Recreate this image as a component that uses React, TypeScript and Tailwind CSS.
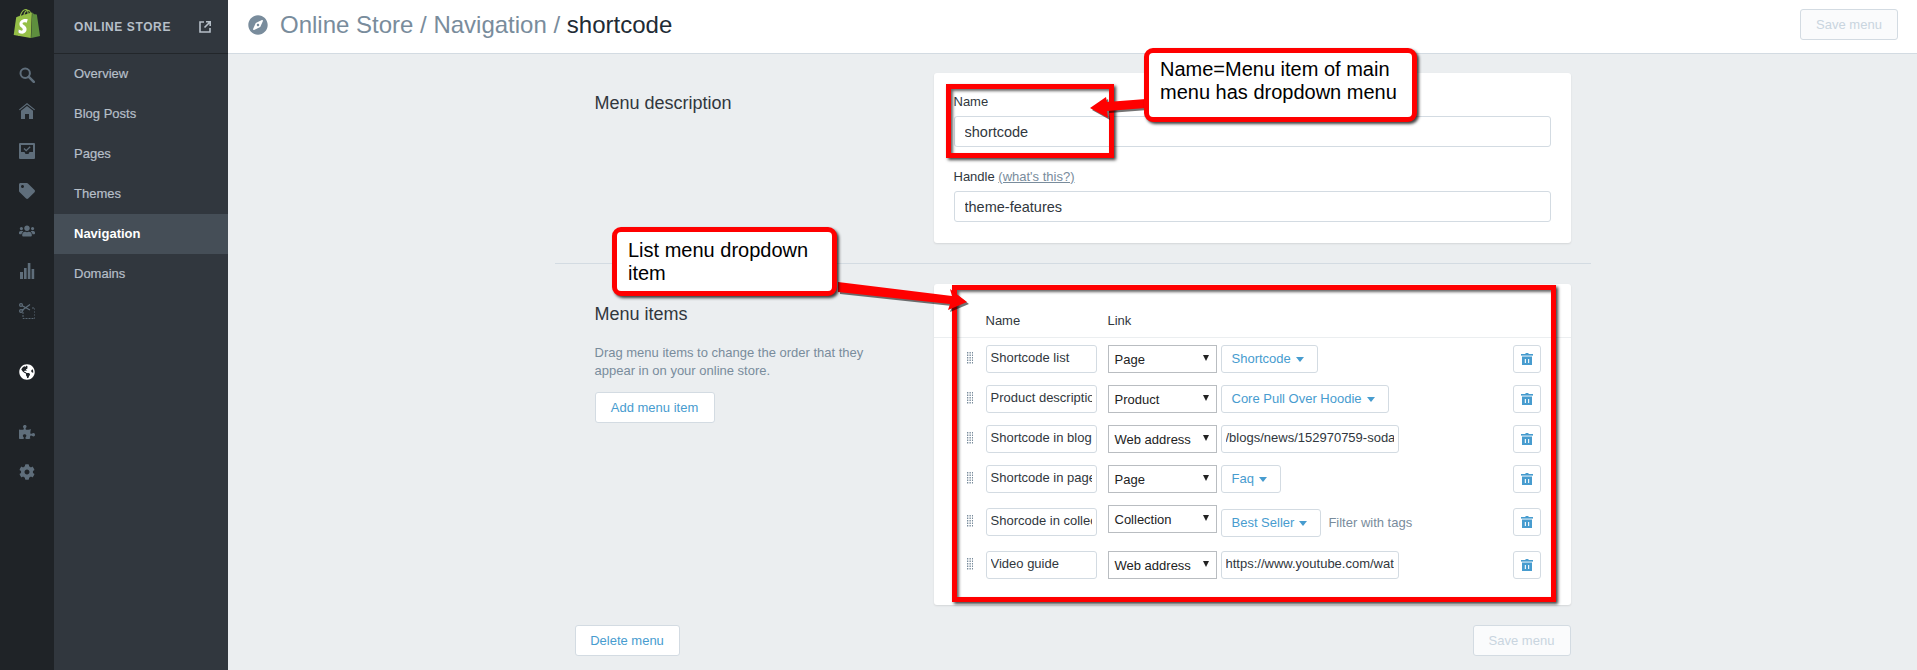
import React from 'react';
import { FaCog, FaCompass, FaGlobeAmericas, FaPuzzlePiece, FaTag, FaUsers } from 'react-icons/fa';

const ShopifyLogo = () => (
  <svg viewBox="0 0 24 24" preserveAspectRatio="none" className="w-[30px] h-[29px]">
    <rect x="5" y="8" width="8" height="14" fill="#fff" />
    <path fill="#5e8e3e" d="M15.337 23.979l7.216-1.561s-2.604-17.613-2.625-17.73c-.018-.116-.114-.192-.211-.192s-1.929-.136-1.929-.136-1.275-1.274-1.439-1.411c-.045-.037-.075-.057-.121-.074l-.914 21.104h.023z" />
    <path fill="#95bf47" d="M11.71 11.305s-.81-.424-1.774-.424c-1.447 0-1.504.906-1.504 1.141 0 1.232 3.24 1.715 3.24 4.629 0 2.295-1.44 3.76-3.406 3.76-2.354 0-3.54-1.465-3.54-1.465l.646-2.086s1.245 1.066 2.28 1.066c.675 0 .975-.545.975-.932 0-1.619-2.654-1.694-2.654-4.359-.034-2.237 1.571-4.416 4.827-4.416 1.257 0 1.875.361 1.875.361l-.945 2.715-.02.01zM11.17.83c.136 0 .271.038.405.135-.984.465-2.064 1.639-2.508 3.992-.656.213-1.293.405-1.889.578C7.697 3.75 8.951.84 11.17.84V.83zm1.235 2.949v.135c-.754.232-1.583.484-2.394.736.466-1.777 1.333-2.645 2.085-2.971.193.501.309 1.176.309 2.1zm.539-2.234c.694.074 1.141.867 1.429 1.755-.349.114-.735.231-1.158.366v-.252c0-.752-.096-1.371-.271-1.871v.002zm2.992 1.289c-.02 0-.06.021-.078.021s-.289.075-.714.21c-.423-1.233-1.176-2.37-2.508-2.37h-.115C12.135.209 11.669 0 11.265 0 8.159 0 6.675 3.877 6.21 5.846c-1.194.365-2.063.636-2.16.674-.675.213-.694.232-.772.87-.075.462-1.83 14.063-1.83 14.063L15.009 24l.927-21.166z" />
  </svg>
);

const SearchIcon = () => (
  <svg viewBox="0 0 16 16" className="w-4 h-4" fill="none" stroke="currentColor">
    <circle cx="6.2" cy="6.2" r="4.7" strokeWidth="2" />
    <path d="M9.8 9.8l5 5" strokeWidth="2.6" strokeLinecap="round" />
  </svg>
);

const HomeIcon = () => (
  <svg viewBox="0 0 16 16" className="w-4 h-4" fill="currentColor">
    <path d="M8 0L0 6.5l.7.8L8 1.5l7.3 5.8.7-.8z" />
    <path d="M8 3L2 7.8V16h4v-5h4v5h4V7.8z" />
  </svg>
);

const InboxIcon = () => (
  <svg viewBox="0 0 16 16" className="w-4 h-4" fill="currentColor">
    <path fillRule="evenodd" d="M1 0h14a1 1 0 011 1v14a1 1 0 01-1 1H1a1 1 0 01-1-1V1a1 1 0 011-1zm1 2v7h3.5l1 2h3l1-2H14V2z" />
    <path d="M5 5.5l2.2 2.2L11.2 3.8" fill="none" stroke="currentColor" strokeWidth="1.3" />
  </svg>
);

const ChartIcon = () => (
  <svg viewBox="0 0 16 16" className="w-4 h-4" fill="currentColor">
    <rect x="1" y="9" width="3" height="7" />
    <rect x="5" y="5" width="2.6" height="11" />
    <rect x="8.8" y="0" width="2.6" height="16" />
    <rect x="12.6" y="6" width="2.6" height="10" />
  </svg>
);

const ScissorsIcon = () => (
  <svg viewBox="0 0 16 16" className="w-4 h-4" fill="none" stroke="currentColor">
    <circle cx="2" cy="2" r="1.4" strokeWidth="1.2" />
    <circle cx="2" cy="8" r="1.4" strokeWidth="1.2" />
    <path d="M3.2 2.8L11 7M3.2 7.2L11 1.5" strokeWidth="1.2" />
    <path d="M4 6v9.5h12V5h-3" strokeWidth="0.9" strokeDasharray="2 1" />
  </svg>
);

const ExternalIcon = () => (
  <svg viewBox="0 0 12 12" className="w-3 h-3" fill="none" stroke="currentColor" strokeWidth="1.6">
    <path d="M5 1H1v10h10V7" />
    <path d="M7 .8h4.2V5M11 1L5.5 6.5" />
  </svg>
);

const TrashIcon = () => (
  <svg viewBox="0 0 12 12" className="w-3 h-3" fill="#479ccf">
    <rect x="4.5" y="0" width="3" height="1" />
    <rect x="0" y="1" width="12" height="1.6" />
    <path fillRule="evenodd" d="M1 3.5h10V12H1zM3.8 6v4h1.1V6zm3.3 0v4h1.1V6z" />
  </svg>
);

const DragHandle = () => (
  <svg viewBox="0 0 6 12" className="w-[6px] h-[12px]" fill="#798c9c">
    {[0, 2.5, 5, 7.5, 10].map((y) =>
      [0, 2.5, 5].map((x) => <rect key={`${x}-${y}`} x={x} y={y} width="1.3" height="1.5" />)
    )}
  </svg>
);

const Caret = ({ className = 'border-x-[4px] border-t-[5px] border-t-[#479ccf]' }: { className?: string }) => (
  <span className={`inline-block w-0 h-0 border-x-transparent ${className}`} />
);

const railIcons = [
  { icon: <SearchIcon />, h: 'h-[40px]' },
  { icon: <HomeIcon />, h: 'h-[32px]' },
  { icon: <InboxIcon />, h: 'h-[48px]' },
  { icon: <FaTag className="w-4 h-4" />, h: 'h-[32px]' },
  { icon: <FaUsers className="w-4 h-4" />, h: 'h-[48px]' },
  { icon: <ChartIcon />, h: 'h-[32px]' },
  { icon: <ScissorsIcon />, h: 'h-[48px]' },
];

const Rail = () => (
  <div className="w-[54px] shrink-0 bg-[#1f2327] text-[#5f6e7b] flex flex-col items-center">
    <div className="h-[54px] w-full flex items-center justify-center pb-[8px]">
      <ShopifyLogo />
    </div>
    <div className="flex flex-col items-center pt-[1px]">
      {railIcons.map((item, i) => (
        <div key={i} className={`${item.h} flex items-center justify-center`}>
          {item.icon}
        </div>
      ))}
    </div>
    <div className="mt-[29px] text-white">
      <FaGlobeAmericas className="w-4 h-4" />
    </div>
    <div className="mt-[44px]">
      <FaPuzzlePiece className="w-4 h-4" />
    </div>
    <div className="mt-[24px]">
      <FaCog className="w-4 h-4" />
    </div>
  </div>
);

const navItems = ['Overview', 'Blog Posts', 'Pages', 'Themes', 'Navigation', 'Domains'];

const NavPanel = () => (
  <div className="w-[174px] shrink-0 bg-[#31373e] text-[#b6bfc8]">
    <div className="h-[54px] border-b border-[#22262a] flex items-center justify-between pl-[20px] pr-[17px]">
      <span className="text-[12px] font-bold tracking-[0.6px]">ONLINE STORE</span>
      <ExternalIcon />
    </div>
    <div className="pt-0">
      {navItems.map((item) => (
        <div
          key={item}
          className={
            item === 'Navigation'
              ? 'h-[40px] pl-[20px] flex items-center text-[13px] font-bold text-white bg-[#454e57]'
              : 'h-[40px] pl-[20px] flex items-center text-[13px] font-medium [-webkit-text-stroke:0.2px_#b6bfc8]'
          }
        >
          {item}
        </div>
      ))}
    </div>
  </div>
);

const Btn = ({ children, className = '' }: { children: React.ReactNode; className?: string }) => (
  <button className={`h-[31px] bg-white border border-[#d3dbe2] rounded-[3px] text-[#479ccf] text-[13px] ${className}`}>
    {children}
  </button>
);

const SaveBtn = () => (
  <button className="h-[31px] w-[98px] bg-[#fafbfc] border border-[#d3dbe2] rounded-[3px] text-[#c9d5df] text-[13px] font-medium">
    Save menu
  </button>
);

const TextInput = ({ value, className = '' }: { value: string; className?: string }) => (
  <input
    readOnly
    value={value}
    className={`h-[28px] bg-white border border-[#d3dbe2] rounded-[3px] px-[4px] pb-[3px] text-[13px] text-[#31373d] outline-none ${className}`}
  />
);

const FakeSelect = ({ value }: { value: string }) => (
  <div className="w-[109px] h-[28px] shrink-0 bg-white border border-[#b9bdc1] flex items-center justify-between pl-[6px] pr-[7px] pt-[1px] text-[13px] text-[#222]">
    <span>{value}</span>
    <span className="-mt-[3px] flex">
      <Caret className="border-x-[3px] border-t-[6px] border-t-[#222]" />
    </span>
  </div>
);

const PickBtn = ({ label, className = '' }: { label: string; className?: string }) => (
  <div className={`h-[28px] bg-white border border-[#d3dbe2] rounded-[3px] pl-[10px] pr-[13px] flex items-center gap-[5px] text-[13px] text-[#479ccf] ${className}`}>
    <span>{label}</span>
    <Caret />
  </div>
);

const TrashBtn = ({ className = '' }: { className?: string }) => (
  <div className={`ml-auto w-[28px] h-[28px] bg-white border border-[#d3dbe2] rounded-[3px] flex items-center justify-center ${className}`}>
    <TrashIcon />
  </div>
);

const MenuRow = ({ name, select, children, last }: { name: string; select: string; children: React.ReactNode; last?: boolean }) => (
  <div className={`flex items-start pl-[33px] pr-[30px] ${last ? 'mb-[14px]' : 'mb-[12px]'}`}>
    <div className={`w-[19px] shrink-0 pt-[7px] ${last ? 'mt-[3px]' : ''}`}>
      <DragHandle />
    </div>
    <TextInput value={name} className={`w-[111px] shrink-0 mr-[11px] ${last ? 'mt-[3px]' : ''}`} />
    <FakeSelect value={select} />
    <div className="ml-[4px] flex items-start flex-1 min-w-0">{children}</div>
  </div>
);

const MenuItemsCard = () => (
  <div className="w-[637px] h-[321px] bg-white rounded-[3px] shadow-[0_1px_2px_rgba(0,0,0,0.1)]">
    <div className="h-[54px] border-b border-[#ebeef0] flex items-center pt-[21px] text-[13px] text-[#31373d]">
      <span className="ml-[52px] w-[122px]">Name</span>
      <span>Link</span>
    </div>
    <div className="pt-[7px]">
      <MenuRow name="Shortcode list" select="Page">
        <PickBtn label="Shortcode" />
        <TrashBtn />
      </MenuRow>
      <MenuRow name="Product description" select="Product">
        <PickBtn label="Core Pull Over Hoodie" />
        <TrashBtn />
      </MenuRow>
      <MenuRow name="Shortcode in blog" select="Web address">
        <TextInput value="/blogs/news/152970759-soda-pop" className="w-[178px]" />
        <TrashBtn />
      </MenuRow>
      <MenuRow name="Shortcode in page" select="Page">
        <PickBtn label="Faq" />
        <TrashBtn />
      </MenuRow>
      <MenuRow name="Shorcode in collection" select="Collection" last>
        <PickBtn label="Best Seller" className="mt-[4px]" />
        <span className="ml-[7px] mt-[8px] text-[13px] text-[#798c9c]">Filter with tags</span>
        <TrashBtn className="mt-[3px]" />
      </MenuRow>
      <MenuRow name="Video guide" select="Web address">
        <TextInput value="https://www.youtube.com/watch?v=shortcode" className="w-[178px]" />
        <TrashBtn />
      </MenuRow>
    </div>
  </div>
);

const Annotations = () => (
  <>
    <div className="absolute left-[946px] top-[84px] w-[168px] h-[74px] border-[5px] border-[#ff0000] shadow-[2px_2px_3px_rgba(0,0,0,0.75),inset_2px_2px_3px_rgba(0,0,0,0.6)]" />
    <div className="absolute left-[952px] top-[285px] w-[604px] h-[317px] border-[5px] border-[#ff0000] shadow-[2px_2px_3px_rgba(0,0,0,0.75),inset_2px_2px_3px_rgba(0,0,0,0.6)]" />
    <svg className="absolute left-0 top-0 w-[1917px] h-[670px] pointer-events-none" viewBox="0 0 1917 670">
      <g fill="#000" opacity="0.55" transform="translate(2 2)">
        <polygon points="1146,99 1107,102 1106,97 1090,108 1108,118 1107,111 1146,108" />
        <polygon points="838,282 952,296 950,289 967,302 948,310 950,304 838,292" />
      </g>
      <polygon fill="#ff0000" points="1146,99 1107,102 1106,97 1090,108 1108,118 1107,111 1146,108" />
      <polygon fill="#ff0000" points="838,282 952,296 950,289 967,302 948,310 950,304 838,292" />
    </svg>
    <div className="absolute left-[1144px] top-[48px] w-[273px] h-[74px] bg-white border-[5px] border-[#ff0000] rounded-[9px] shadow-[2px_2px_3px_rgba(0,0,0,0.75)] pl-[11px] pt-[5px] text-[20px] leading-[23px] text-black">
      Name=Menu item of main
      <br />
      menu has dropdown menu
    </div>
    <div className="absolute left-[612px] top-[227px] w-[225px] h-[69px] bg-white border-[5px] border-[#ff0000] rounded-[9px] shadow-[2px_2px_3px_rgba(0,0,0,0.75)] pl-[11px] pt-[7px] text-[20px] leading-[23px] text-black">
      List menu dropdown
      <br />
      item
    </div>
  </>
);

export default function App() {
  return (
    <div className="relative w-[1917px] h-[670px] overflow-hidden flex bg-[#ebeef0] [font-family:'Liberation_Sans',Arial,sans-serif]">
      <Rail />
      <NavPanel />
      <div className="flex-1 min-w-0">
        <header className="h-[54px] bg-white border-b border-[#d3dbe2] flex items-center pl-[20px] pr-[19px] pb-[4px]">
          <FaCompass className="w-5 h-5 text-[#798c9c] mr-[12px]" />
          <h1 className="text-[24px] text-[#798c9c]">
            Online Store / Navigation / <span className="text-[#212b35]">shortcode</span>
          </h1>
          <div className="ml-auto">
            <SaveBtn />
          </div>
        </header>
        <main className="w-[1036px] mx-auto pt-[19px]">
          <section className="flex px-[20px] pb-[20px] border-b border-[#d3dbe2]">
            <div className="w-[359px] pl-[20px] pt-[17px] text-[18px] text-[#31373d]">Menu description</div>
            <div className="w-[637px] h-[170px] bg-white rounded-[3px] shadow-[0_1px_2px_rgba(0,0,0,0.1)] px-[20px] pt-[20px] text-[13px] text-[#31373d]">
              <div className="h-[23px] leading-[17px]">Name</div>
              <input readOnly value="shortcode" className="block w-full h-[31px] border border-[#d3dbe2] rounded-[3px] px-[10px] text-[14.5px] outline-none" />
              <div className="h-[24px] pt-[21px] mb-[20px] leading-[17px]">
                Handle <a className="text-[#798c9c] underline">(what's this?)</a>
              </div>
              <input readOnly value="theme-features" className="block w-full h-[31px] border border-[#d3dbe2] rounded-[3px] px-[10px] text-[14.5px] outline-none" />
            </div>
          </section>
          <section className="flex px-[20px] pt-[20px]">
            <div className="w-[359px] pl-[20px] pt-[17px]">
              <div className="text-[18px] text-[#31373d]">Menu items</div>
              <p className="mt-[16px] w-[290px] text-[13px] leading-[18px] text-[#798c9c]">
                Drag menu items to change the order that they appear in on your online store.
              </p>
              <Btn className="mt-[12px] w-[120px]">Add menu item</Btn>
            </div>
            <MenuItemsCard />
          </section>
          <div className="flex justify-between px-[20px] mt-[20px]">
            <Btn className="w-[105px]">Delete menu</Btn>
            <SaveBtn />
          </div>
        </main>
      </div>
      <Annotations />
    </div>
  );
}
